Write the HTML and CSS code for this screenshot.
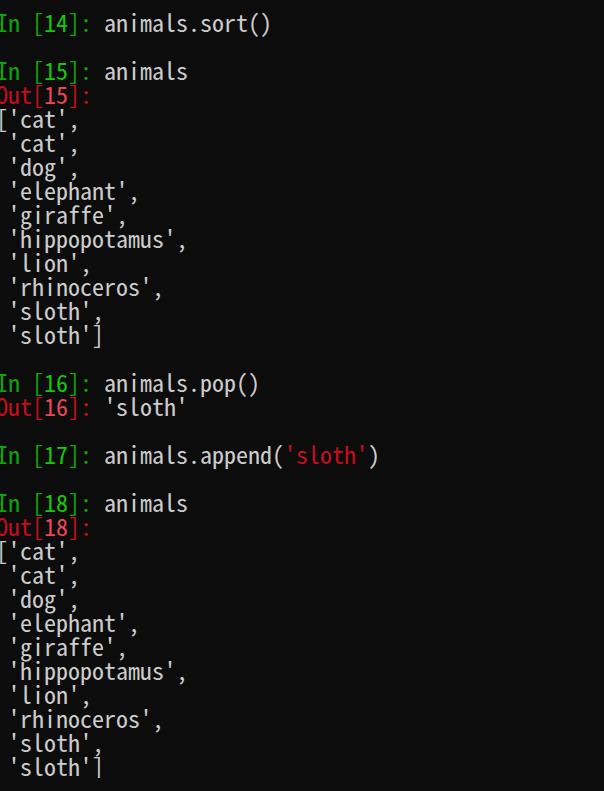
FILE: index.html
```html
<!DOCTYPE html>
<html>
<head>
<meta charset="utf-8">
<link rel="stylesheet" href="styles.css">
</head>
<body>
<pre class="term"><span class="ig">In [</span><span class="ign">14</span><span class="ig">]: </span>animals.sort()

<span class="ig">In [</span><span class="ign">15</span><span class="ig">]: </span>animals
<span class="or">Out[</span><span class="orn">15</span><span class="or">]:</span>
['cat',
 'cat',
 'dog',
 'elephant',
 'giraffe',
 'hippopotamus',
 'lion',
 'rhinoceros',
 'sloth',
 'sloth']

<span class="ig">In [</span><span class="ign">16</span><span class="ig">]: </span>animals.pop()
<span class="or">Out[</span><span class="orn">16</span><span class="or">]: </span>'sloth'

<span class="ig">In [</span><span class="ign">17</span><span class="ig">]: </span>animals.append(<span class="str">'sloth'</span>)

<span class="ig">In [</span><span class="ign">18</span><span class="ig">]: </span>animals
<span class="or">Out[</span><span class="orn">18</span><span class="or">]:</span>
['cat',
 'cat',
 'dog',
 'elephant',
 'giraffe',
 'hippopotamus',
 'lion',
 'rhinoceros',
 'sloth',
 'sloth']</pre>
</body>
</html>
```
FILE: styles.css
```css
html, body {
  margin: 0;
  padding: 0;
  background: #0c0c0c;
  overflow: hidden;
}
.term {
  margin: 10px 0 0 -4px;
  font-family: "Noto Sans CJK JP", "Liberation Mono", monospace;
  font-feature-settings: "hwid" 1, "liga" 0, "kern" 0;
  font-variant-ligatures: none;
  font-kerning: none;
  font-size: 24px;
  line-height: 24px;
  color: #cccccc;
  white-space: pre;
}
.ig { color: #13a10e; }
.ign { color: #16c60c; }
.or { color: #c50f1f; }
.orn { color: #e74856; }
.str { color: #c50f1f; }
```
